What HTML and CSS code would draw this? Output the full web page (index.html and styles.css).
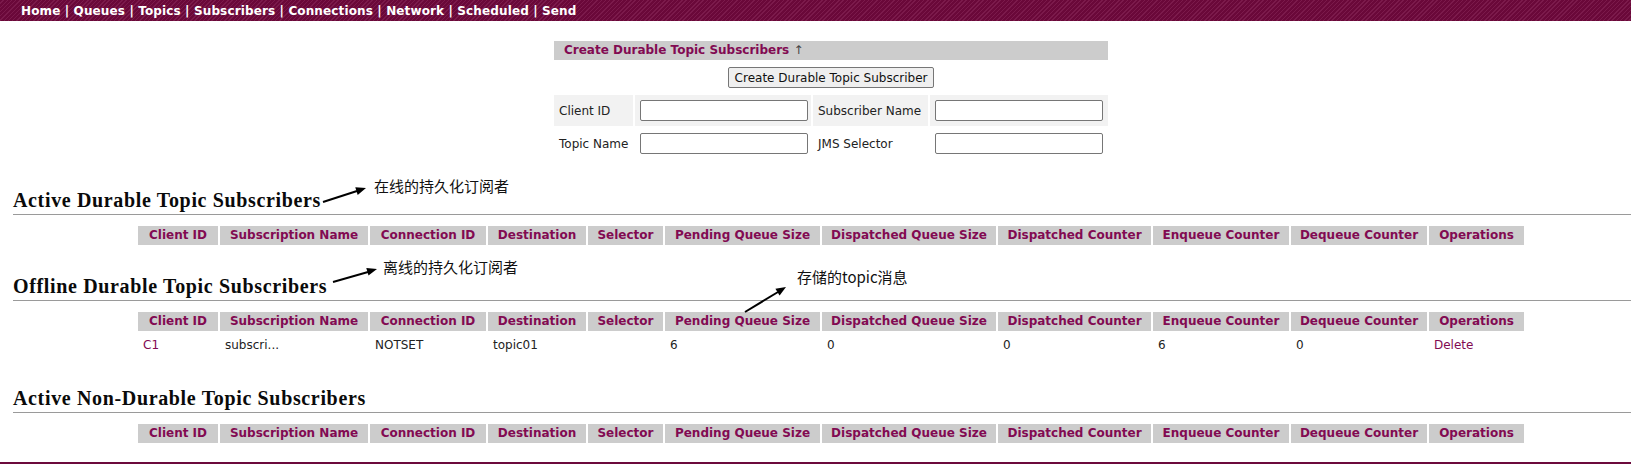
FILE: index.html
```html
<!DOCTYPE html>
<html>
<head>
<meta charset="utf-8">
<title>Subscribers</title>
<link rel="stylesheet" href="styles.css">
</head>
<body>
<div class="page">
  <div class="navbar">
    <a href="#">Home</a> | <a href="#">Queues</a> | <a href="#">Topics</a> | <a href="#">Subscribers</a> | <a href="#">Connections</a> | <a href="#">Network</a> | <a href="#">Scheduled</a> | <a href="#">Send</a>
  </div>

  <table class="create">
    <colgroup>
      <col class="cc1"><col class="cc2"><col class="cc3"><col class="cc4">
    </colgroup>
    <tr><th colspan="4" class="create-head">Create Durable Topic Subscribers <span class="arrow">↑</span></th></tr>
    <tr><td colspan="4" class="btn-cell"><button class="btn">Create Durable Topic Subscriber</button></td></tr>
    <tr class="shaded">
      <td class="lbl">Client ID</td><td class="inp"><input type="text" class="field"></td>
      <td class="lbl">Subscriber Name</td><td class="inp"><input type="text" class="field"></td>
    </tr>
    <tr>
      <td class="lbl">Topic Name</td><td class="inp"><input type="text" class="field"></td>
      <td class="lbl">JMS Selector</td><td class="inp"><input type="text" class="field"></td>
    </tr>
  </table>

  <h2 class="section-title">Active Durable Topic Subscribers</h2>
  <div class="rule"></div>
  <table class="data">
    <colgroup>
      <col class="w1"><col class="w2"><col class="w3"><col class="w4"><col class="w5"><col class="w6"><col class="w7"><col class="w8"><col class="w9"><col class="w10"><col class="w11">
    </colgroup>
    <tr>
      <th>Client ID</th><th>Subscription Name</th><th>Connection ID</th><th>Destination</th><th>Selector</th><th>Pending Queue Size</th><th>Dispatched Queue Size</th><th>Dispatched Counter</th><th>Enqueue Counter</th><th>Dequeue Counter</th><th>Operations</th>
    </tr>
  </table>

  <h2 class="section-title">Offline Durable Topic Subscribers</h2>
  <div class="rule"></div>
  <table class="data">
    <colgroup>
      <col class="w1"><col class="w2"><col class="w3"><col class="w4"><col class="w5"><col class="w6"><col class="w7"><col class="w8"><col class="w9"><col class="w10"><col class="w11">
    </colgroup>
    <tr>
      <th>Client ID</th><th>Subscription Name</th><th>Connection ID</th><th>Destination</th><th>Selector</th><th>Pending Queue Size</th><th>Dispatched Queue Size</th><th>Dispatched Counter</th><th>Enqueue Counter</th><th>Dequeue Counter</th><th>Operations</th>
    </tr>
    <tr>
      <td><a href="#">C1</a></td><td>subscri...</td><td>NOTSET</td><td>topic01</td><td></td><td>6</td><td>0</td><td>0</td><td>6</td><td>0</td><td><a href="#">Delete</a></td>
    </tr>
  </table>

  <h2 class="section-title">Active Non-Durable Topic Subscribers</h2>
  <div class="rule"></div>
  <table class="data">
    <colgroup>
      <col class="w1"><col class="w2"><col class="w3"><col class="w4"><col class="w5"><col class="w6"><col class="w7"><col class="w8"><col class="w9"><col class="w10"><col class="w11">
    </colgroup>
    <tr>
      <th>Client ID</th><th>Subscription Name</th><th>Connection ID</th><th>Destination</th><th>Selector</th><th>Pending Queue Size</th><th>Dispatched Queue Size</th><th>Dispatched Counter</th><th>Enqueue Counter</th><th>Dequeue Counter</th><th>Operations</th>
    </tr>
  </table>

  <div class="footer"></div>

  <svg class="annot-svg" width="1631" height="464" viewBox="0 0 1631 464">
    <line x1="323" y1="202" x2="357" y2="191" class="ann-line"/>
    <polygon points="366,188 357.7,194.9 355.3,187.3" class="ann-head"/>
    <line x1="333" y1="282" x2="368" y2="272" class="ann-line"/>
    <polygon points="377,269 368.5,275.6 366.3,268.0" class="ann-head"/>
    <line x1="745" y1="312" x2="778" y2="292" class="ann-line"/>
    <polygon points="786,287 779.6,295.6 775.4,288.8" class="ann-head"/>
  </svg>
  <span class="note note1">在线的持久化订阅者</span>
  <span class="note note2">离线的持久化订阅者</span>
  <span class="note note3">存储的topic消息</span>
</div>
</body>
</html>
```

FILE: styles.css
```css
html, body {
  margin: 0;
  padding: 0;
  background: #ffffff;
}
body {
  font-family: "DejaVu Sans", Verdana, sans-serif;
  font-size: 12px;
  color: #222222;
}
.page {
  position: relative;
  width: 1631px;
  height: 464px;
  overflow: hidden;
}
.navbar {
  height: 21px;
  box-sizing: border-box;
  padding: 1px 0 0 21px;
  line-height: 20px;
  font-weight: bold;
  font-size: 12px;
  letter-spacing: 0.13px;
  color: #ffffff;
  white-space: nowrap;
  background-color: #6c0a3c;
  background-image: repeating-linear-gradient(135deg, #6a0839 0px, #6a0839 2px, #7b1a4b 2px, #7b1a4b 3px);
}
.navbar a {
  color: #ffffff;
  text-decoration: none;
}

/* create form */
.create {
  margin: 18px 0 0 552px;
  width: 558px;
  table-layout: fixed;
  border-collapse: separate;
  border-spacing: 2px;
}
.cc1 { width: 79px; }
.cc2 { width: 176px; }
.cc3 { width: 115px; }
.cc4 { width: 178px; }
.create-head {
  background: #cccccc;
  color: #820a52;
  text-align: left;
  font-weight: bold;
  height: 19px;
  line-height: 19px;
  padding: 0 0 0 10px;
}
.create-head .arrow {
  font-weight: normal;
  color: #444444;
}
.btn-cell {
  text-align: center;
  padding: 5px 0;
  height: 21px;
}
.btn {
  font-family: "DejaVu Sans", Verdana, sans-serif;
  font-size: 12px;
  height: 21px;
  padding: 0 6px;
  color: #111111;
  background: #efefef;
  border: 1px solid #767676;
  border-radius: 2px;
}
.lbl, .inp {
  padding: 5px;
  height: 21px;
  vertical-align: middle;
  white-space: nowrap;
  color: #222222;
}
.shaded td {
  background: #f2f2f2;
}
.field {
  display: block;
  box-sizing: border-box;
  width: 168px;
  height: 21px;
  margin: 0;
  border: 1px solid #767676;
  border-radius: 2px;
  background: #ffffff;
}

/* sections */
.section-title {
  margin: 27px 0 2px 13px;
  font-family: "Liberation Serif", "Times New Roman", serif;
  font-size: 20px;
  letter-spacing: 0.65px;
  line-height: 24px;
  font-weight: bold;
  color: #0a0a0a;
}
.rule {
  margin-left: 13px;
  height: 1px;
  background: #9a9a9a;
}
.data {
  margin: 9px 0 0 136px;
  width: 1390px;
  table-layout: fixed;
  border-collapse: separate;
  border-spacing: 2px;
}
.w1 { width: 80px; }
.w2 { width: 148px; }
.w3 { width: 116px; }
.w4 { width: 98px; }
.w5 { width: 75px; }
.w6 { width: 155px; }
.w7 { width: 174px; }
.w8 { width: 153px; }
.w9 { width: 136px; }
.w10 { width: 136px; }
.w11 { width: 95px; }
.data th {
  background: #cccccc;
  color: #820a52;
  font-weight: bold;
  font-size: 12px;
  height: 19px;
  line-height: 19px;
  padding: 0;
  text-align: center;
  white-space: nowrap;
  overflow: hidden;
}
.data td {
  height: 24px;
  padding: 0 0 0 5px;
  line-height: 24px;
  vertical-align: middle;
  white-space: nowrap;
  color: #222222;
}
.data a, .create a {
  color: #820a52;
  text-decoration: none;
}
.footer {
  margin-top: 17px;
  height: 20px;
  background-color: #6c0a3c;
}

/* annotations */
.annot-svg {
  position: absolute;
  left: 0;
  top: 0;
  pointer-events: none;
}
.ann-line {
  stroke: #000000;
  stroke-width: 2;
}
.ann-head {
  fill: #000000;
}
.note {
  position: absolute;
  font-family: "Noto Sans CJK SC", "Noto Sans", sans-serif;
  font-size: 15px;
  line-height: 16px;
  color: #111111;
  white-space: nowrap;
}
.note1 { left: 374px; top: 178px; }
.note2 { left: 383px; top: 259px; }
.note3 { left: 797px; top: 269px; }
```
